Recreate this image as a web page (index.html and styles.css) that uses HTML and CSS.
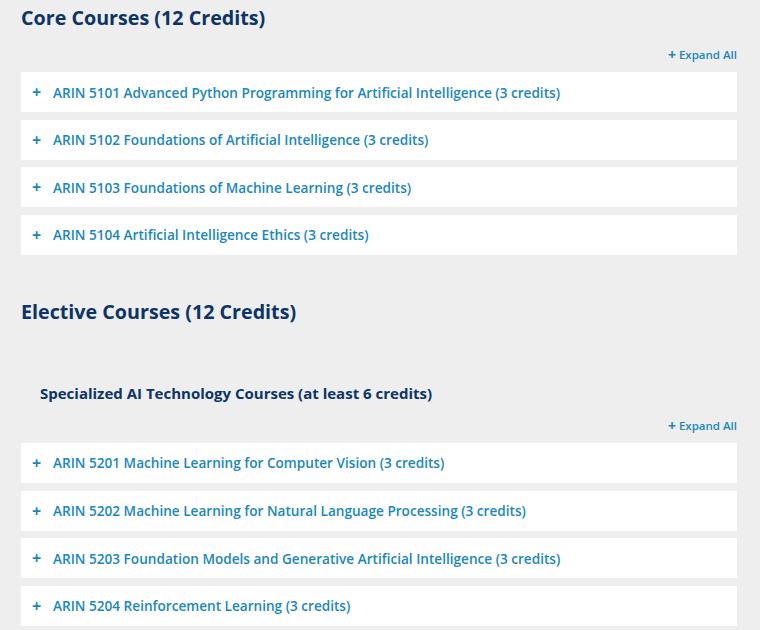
FILE: index.html
```html
<!DOCTYPE html>
<html>
<head>
<meta charset="utf-8">
<link rel="stylesheet" href="styles.css">
</head>
<body>
<div class="page">
  <section class="group first">
    <h2 class="title">Core Courses (12 Credits)</h2>
    <div class="expand-row"><a class="expand"><span class="expand-plus">+</span><span>Expand All</span></a></div>
    <ul class="list">
      <li class="item"><span class="plus">+</span><span class="label">ARIN 5101 Advanced Python Programming for Artificial Intelligence (3 credits)</span></li>
      <li class="item"><span class="plus">+</span><span class="label">ARIN 5102 Foundations of Artificial Intelligence (3 credits)</span></li>
      <li class="item"><span class="plus">+</span><span class="label">ARIN 5103 Foundations of Machine Learning (3 credits)</span></li>
      <li class="item"><span class="plus">+</span><span class="label">ARIN 5104 Artificial Intelligence Ethics (3 credits)</span></li>
    </ul>
  </section>
  <section class="group second">
    <h2 class="title">Elective Courses (12 Credits)</h2>
    <h3 class="subtitle">Specialized AI Technology Courses (at least 6 credits)</h3>
    <div class="expand-row"><a class="expand"><span class="expand-plus">+</span><span>Expand All</span></a></div>
    <ul class="list">
      <li class="item"><span class="plus">+</span><span class="label">ARIN 5201 Machine Learning for Computer Vision (3 credits)</span></li>
      <li class="item"><span class="plus">+</span><span class="label">ARIN 5202 Machine Learning for Natural Language Processing (3 credits)</span></li>
      <li class="item"><span class="plus">+</span><span class="label">ARIN 5203 Foundation Models and Generative Artificial Intelligence (3 credits)</span></li>
      <li class="item"><span class="plus">+</span><span class="label">ARIN 5204 Reinforcement Learning (3 credits)</span></li>
    </ul>
  </section>
</div>
</body>
</html>
```

FILE: styles.css
```css
html, body {
  margin: 0;
  padding: 0;
  background: #eeeeee;
}
body {
  font-family: "Open Sans", "Noto Sans", sans-serif;
}
.page {
  padding: 0 23px 0 21px;
}
.title {
  margin: 0;
  font-size: 19.7px;
  line-height: 24px;
  font-weight: 700;
  color: #0c3466;
}
.group.first .title {
  padding-top: 6px;
}
.group.second {
  padding-top: 45px;
}
.subtitle {
  margin: 0;
  padding: 59px 0 0 19px;
  font-size: 15px;
  line-height: 20px;
  font-weight: 700;
  color: #0c3466;
}
.expand-row {
  display: flex;
  justify-content: flex-end;
  margin-top: 15px;
  height: 20px;
  align-items: center;
}
.group.second .expand-row {
  margin-top: 13px;
}
.expand {
  display: inline-flex;
  align-items: center;
  gap: 3px;
  font-size: 11.5px;
  line-height: 14px;
  font-weight: 600;
  color: #1a87bd;
}
.expand-plus {
  font-size: 14px;
  line-height: 14px;
  font-weight: 700;
}
.list {
  list-style: none;
  margin: 7px 0 0;
  padding: 0;
  display: flex;
  flex-direction: column;
  gap: 7.67px;
}
.group.second .list {
  margin-top: 7px;
}
.item {
  background: #ffffff;
  height: 40px;
  display: flex;
  align-items: center;
  padding-left: 11px;
  color: #1a87bd;
  font-size: 13.6px;
  font-weight: 600;
}
.plus {
  width: 21px;
  font-size: 16px;
  font-weight: 700;
}
```
